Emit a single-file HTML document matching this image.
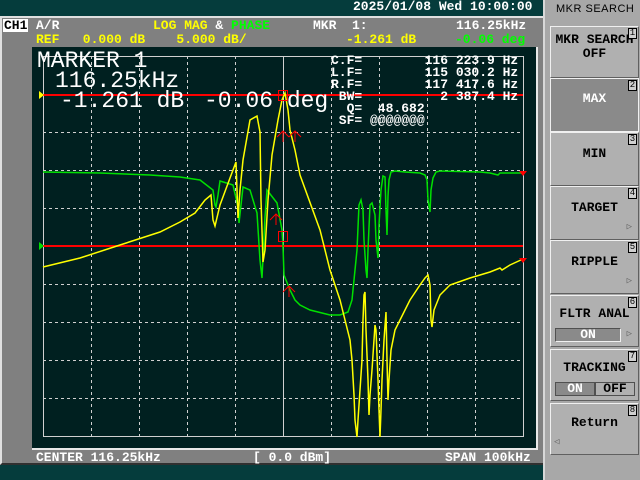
<!DOCTYPE html>
<html><head><meta charset="utf-8"><style>
*{margin:0;padding:0;box-sizing:border-box}
body{width:640px;height:480px;background:#053c3c;position:relative;overflow:hidden;font-family:"Liberation Mono",monospace;font-weight:bold;font-size:13px}
.a{position:absolute;white-space:pre;line-height:13px}
.w{color:#fff}.y{color:#ffff00}.g{color:#00ff00}.k{color:#000}
#body{position:absolute;left:0;top:16px;width:544px;height:449px;background:#808080;border-top:2px solid #e0e0e0;border-left:2px solid #e0e0e0;border-bottom:2px solid #303030}
#plot{position:absolute;left:32px;top:47px;width:506px;height:403px;background:#002020;border-right:2px solid #e8e8e8;border-bottom:2px solid #e8e8e8}
#rp{position:absolute;left:543px;top:0;width:97px;height:480px;background:#a8a8a8;border-left:2px solid #d8d8d8}
.b{position:absolute;left:5px;width:89px;background:#b0b0b0;border:1px solid #606060;border-top-color:#f0f0f0;border-left-color:#f0f0f0;color:#000;text-align:center;font-size:13px}
.n{position:absolute;right:1px;top:1px;width:9px;height:11px;border:1px solid #000;font-size:9px;line-height:9px;background:#d0d0d0;color:#000;font-weight:normal}
.big{font-family:"Liberation Mono",monospace;font-weight:normal;font-size:23px;line-height:23px;color:#fff}
.tri{position:absolute;font-size:9px;color:#606060;font-weight:normal}
</style></head><body>
<div class="a w" style="left:353px;top:0px;font-size:13px">2025/01/08 Wed 10:00:00</div>
<div id="body"></div>
<div class="a" style="left:3px;top:19px;background:#fff;color:#000;padding:0 1px">CH1</div>
<div class="a w" style="left:36px;top:19px">A/R</div>
<div class="a" style="left:153px;top:19px"><span class="y">LOG MAG </span><span class="w">&amp;</span><span class="g"> PHASE</span></div>
<div class="a w" style="left:313px;top:19px">MKR  1:</div>
<div class="a w" style="left:456px;top:19px">116.25kHz</div>
<div class="a y" style="left:36px;top:33px">REF   0.000 dB    5.000 dB/</div>
<div class="a y" style="left:346px;top:33px">-1.261 dB</div>
<div class="a g" style="left:455px;top:33px">-0.06 deg</div>
<div id="plot"></div>
<svg style="position:absolute;left:0;top:0" width="545" height="480">
<g stroke="#d0d0d0" stroke-width="1" stroke-dasharray="3,3" fill="none">
<path d="M91.5 56V436M139.5 56V436M187.5 56V436M235.5 56V436M331.5 56V436M379.5 56V436M427.5 56V436M475.5 56V436"/>
<path d="M43 94.5H523M43 132.5H523M43 170.5H523M43 208.5H523M43 246.5H523M43 284.5H523M43 322.5H523M43 360.5H523M43 398.5H523"/>
</g>
<rect x="43.5" y="56.5" width="480" height="380" fill="none" stroke="#d0d0d0"/>
<path d="M283.5 56V436" stroke="#d0d0d0"/>
<path d="M40 95H523M40 246H523" stroke="#ff0000" stroke-width="2"/>
<polyline fill="none" stroke="#00e000" stroke-width="1.5" points="43,172 100,173 150,175 180,177 200,180 213,190 215,205 216,207 218,195 220,181 233,185 238,207 239,223 243,187 250,190 257,213 260,260 262,278 265,217 267,190 277,203 282,230 283,246 284,275 290,290 295,300 300,305 310,310 330,315 340,315 348,312 352,300 355,270 357,250 359,205 361,200 363,210 364,240 366,270 367,278 368,250 370,205 372,203 375,215 376,240 378,258 379,225 381,190 383,176 385,177 386,210 387,235 388,196 389,180 391,172 395,171 405,172 420,173 425,175 427,180 428,200 430,212 431,190 433,178 436,172 440,171 480,172 490,173 498,175 500,173 523,173"/>
<polyline fill="none" stroke="#ffff00" stroke-width="1.5" points="43,267 80,258 120,245 160,232 180,222 195,213 205,200 211,195 213,220 215,226 220,205 230,178 236,162 238,218 240,190 243,160 250,120 257,116 260,132 261,200 263,262 265,250 268,200 272,155 278,120 282,100 285,93 288,110 290,130 295,150 300,175 320,230 330,270 340,300 345,320 350,340 352,360 354,395 355,420 357,437 358,420 360,390 362,360 363,320 364,295 365,292 366,330 368,380 369,415 370,395 372,370 375,325 376,330 378,380 379,410 380,437 381,410 382,380 384,340 386,312 387,360 388,400 389,380 391,350 395,330 400,320 410,300 420,285 425,278 428,275 430,285 431,320 432,327 434,310 440,295 450,285 470,278 490,272 500,268 502,270 510,265 523,259"/>
<g stroke="#ff0000" fill="none" stroke-width="1">
<rect x="278.5" y="90.5" width="9" height="10"/>
<rect x="278.5" y="231.5" width="9" height="10"/>
<path d="M277 137L283 131L289 137M283 131V142M289 137L295 131L301 137M295 131V142M270 220L276 214L282 220M276 214V225M283 292L289 286L295 292M289 286V297"/>
</g>
<path d="M519 171L527 171L523 176Z M519 258L527 258L523 263Z" fill="#ff0000"/>
<path d="M39 91L44 95L39 99Z" fill="#ffff00"/>
<path d="M39 242L44 246L39 250Z" fill="#00e000"/>
</svg>
<div class="a big" style="left:37px;top:50px">MARKER 1</div>
<div class="a big" style="left:55px;top:70px">116.25kHz</div>
<div class="a big" style="left:60px;top:90px">-1.261 dB</div>
<div class="a big" style="left:204px;top:90px">-0.06 deg</div>
<div class="a w" style="left:331px;top:55px;line-height:12px">C.F=        116 223.9 Hz
L.F=        115 030.2 Hz
R.F=        117 417.6 Hz
 BW=          2 387.4 Hz
  Q=  48.682
 SF= @@@@@@@</div>
<div class="a w" style="left:36px;top:451px">CENTER 116.25kHz</div>
<div class="a w" style="left:253px;top:451px">[ 0.0 dBm]</div>
<div class="a w" style="left:445px;top:451px">SPAN 100kHz</div>
<div id="rp">
<div class="a k" style="left:11px;top:3px;font-weight:normal;font-family:'Liberation Sans',sans-serif;font-size:11px;letter-spacing:0.5px">MKR SEARCH</div>
<div class="b" style="top:26px;height:52px;padding-top:6px;line-height:14px">MKR SEARCH<br>OFF<span class="n">1</span></div>
<div class="b" style="top:78px;height:54px;background:#8a8a8a;color:#fff;padding-top:12px;border-color:#f0f0f0">MAX<span class="n">2</span></div>
<div class="b" style="top:132px;height:54px;padding-top:13px">MIN<span class="n">3</span></div>
<div class="b" style="top:186px;height:54px;padding-top:13px">TARGET<span class="n">4</span><span class="tri" style="right:6px;top:35px">▷</span></div>
<div class="b" style="top:240px;height:54px;padding-top:13px">RIPPLE<span class="n">5</span><span class="tri" style="right:6px;top:35px">▷</span></div>
<div class="b" style="top:295px;height:52px;padding-top:10px">FLTR ANAL<span class="n">6</span>
<div style="position:absolute;left:4px;top:32px;width:66px;height:14px;background:#8a8a8a;color:#fff;border:1px solid #505050;border-bottom-color:#f0f0f0;border-right-color:#f0f0f0;line-height:12px">ON</div><span class="tri" style="right:6px;top:33px">▷</span></div>
<div class="b" style="top:349px;height:52px;padding-top:10px">TRACKING<span class="n">7</span>
<div style="position:absolute;left:4px;top:32px;width:40px;height:14px;background:#8a8a8a;color:#fff;border:1px solid #505050;line-height:12px">ON</div>
<div style="position:absolute;left:44px;top:32px;width:40px;height:14px;background:#b0b0b0;border:1px solid #505050;line-height:12px">OFF</div></div>
<div class="b" style="top:403px;height:52px;padding-top:11px">Return<span class="n">8</span><span class="tri" style="left:3px;top:33px">◁</span></div>
</div>
</body></html>
